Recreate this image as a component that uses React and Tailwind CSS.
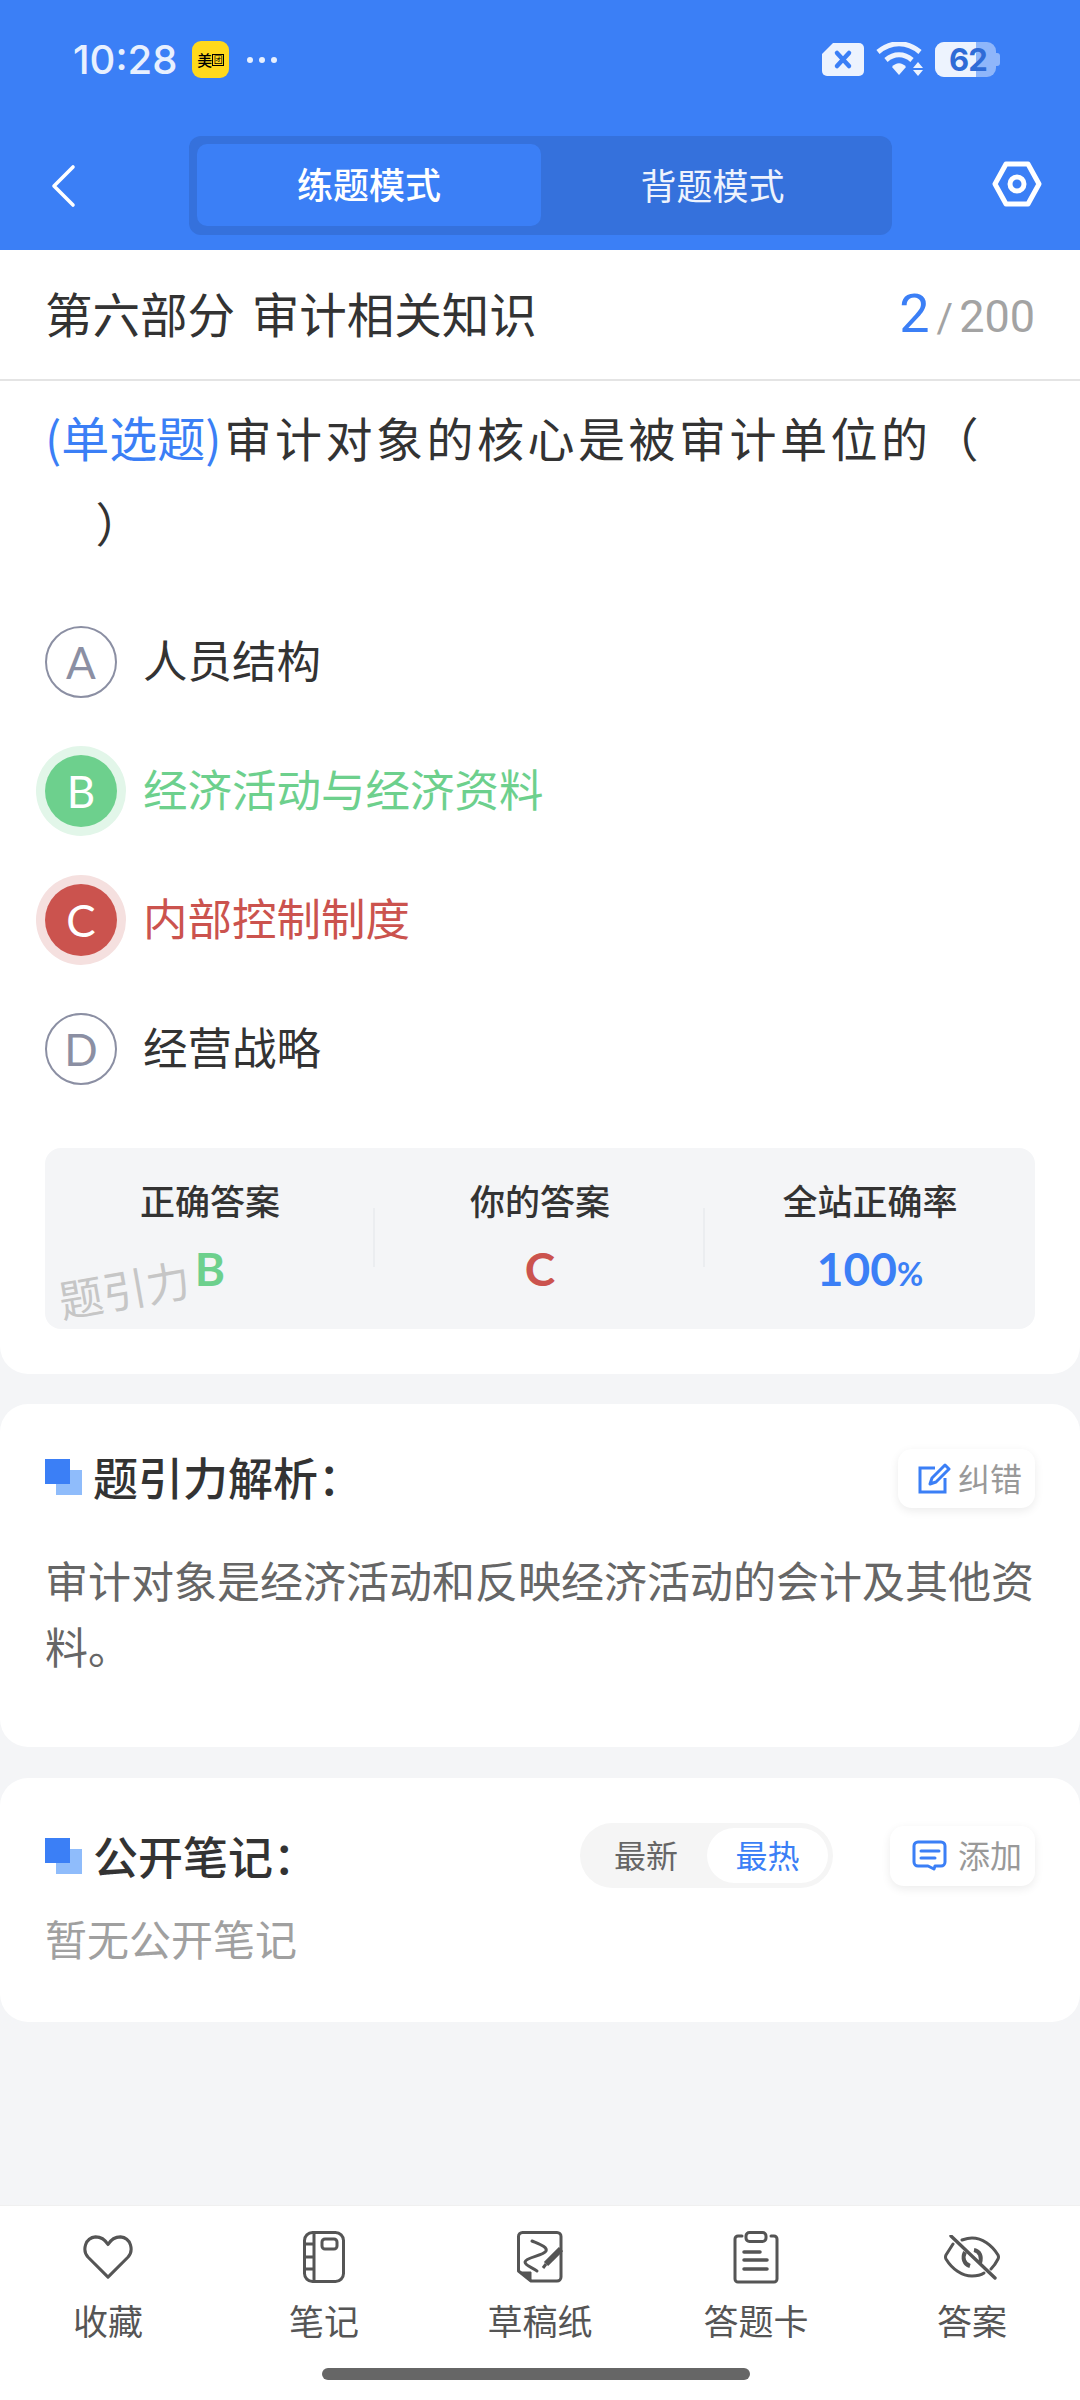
const cjk = { fontFamily: '"Noto Sans CJK SC", "Noto Sans", sans-serif' };

const StatusBar = () => (
  <div className="h-[120px] flex items-start justify-between pt-[41px] pl-[73px] pr-[80px]">
    <div className="flex items-center h-[37px]">
      <span className="text-[40px] leading-[37px] font-medium text-[#e8f0fe] font-['Inter']">10:28</span>
      <div className="ml-[15px] w-[37px] h-[37px] rounded-[9px] bg-[#ffd91c] flex items-center justify-center">
        <span className="text-[15px] leading-none font-medium text-black">美</span>
        <span className="w-[12px] h-[12px] border border-black text-[9px] leading-[10px] text-center text-black">团</span>
      </div>
      <div className="ml-[18px] flex gap-[6px]">
        <span className="w-[6px] h-[6px] rounded-full bg-[#e8f0fe]" />
        <span className="w-[6px] h-[6px] rounded-full bg-[#e8f0fe]" />
        <span className="w-[6px] h-[6px] rounded-full bg-[#e8f0fe]" />
      </div>
    </div>
    <div className="flex items-center h-[37px] gap-[11px]">
      <svg width="44" height="35" viewBox="0 0 44 35">
        <path d="M12 1H38a5 5 0 0 1 5 5V29a5 5 0 0 1-5 5H6a5 5 0 0 1-5-5V12z" fill="#edf3fe" />
        <path d="M16 11l12 13M28 11L16 24" stroke="#3b7ff6" strokeWidth="4.5" strokeLinecap="round" />
      </svg>
      <svg width="48" height="36" viewBox="0 0 48 36">
        <path d="M2 10C15 -1 31 -1 44 10" fill="none" stroke="#edf3fe" strokeWidth="5" />
        <path d="M10 18C18 11 28 11 36 18" fill="none" stroke="#edf3fe" strokeWidth="5" />
        <path d="M16 25C20 20 26 20 30 25L23 33z" fill="#edf3fe" />
        <path d="M42 20l5 6H37zM37 28h10l-5 6z" fill="#edf3fe" />
      </svg>
      <div className="relative w-[65px] h-[35px]">
        <div className="absolute left-0 top-0 w-[61px] h-[35px] rounded-[9px] bg-[#8fb6fa]" />
        <div className="absolute right-0 top-[11px] w-[5px] h-[13px] rounded-r-[3px] bg-[#8fb6fa]" />
        <div className="absolute left-0 top-0 w-[41px] h-[35px] rounded-l-[9px] bg-[#edf3fe]" />
        <span className="absolute left-[14px] top-0 text-[31px] leading-[35px] font-bold text-[#2f6bd6] font-['Inter'] tracking-[-1px]">62</span>
      </div>
    </div>
  </div>
);

const Header = () => (
  <div className="h-[130px] flex items-start pl-[50px] pt-[16px]">
    <svg width="26" height="44" viewBox="0 0 26 44" fill="none" stroke="white" strokeWidth="3.6" strokeLinecap="round" strokeLinejoin="round" className="mt-[28px]">
      <path d="M23 3L4 22L23 41" />
    </svg>
    <div className="ml-[113px] w-[703px] h-[99px] rounded-[12px] bg-[#3571dc] p-[8px] flex">
      <div className="w-[344px] h-[82px] rounded-[10px] bg-[#3b7ff6] flex items-center justify-center pb-[4px]">
        <span className="text-[36px] font-medium text-white">练题模式</span>
      </div>
      <div className="flex-1 flex items-center justify-center pb-[4px]">
        <span className="text-[36px] text-[#eef3fd]">背题模式</span>
      </div>
    </div>
    <svg width="50" height="46" viewBox="0 0 50 46" className="ml-[100px] mt-[25px]">
      <path d="M14 3H36L47 23L36 43H14L3 23z" fill="none" stroke="white" strokeWidth="5" strokeLinejoin="round" />
      <circle cx="25" cy="23" r="7" fill="none" stroke="white" strokeWidth="5" />
    </svg>
  </div>
);

const OptionRow = ({ letter, text, state }) => {
  const circle = {
    none: 'border-2 border-[#8b8fa3] text-[#8b8fa3]',
    right: 'bg-[#6dd08d] text-white ring-[9px] ring-[#e2f6e9]',
    wrong: 'bg-[#cb534e] text-white ring-[9px] ring-[#f5e0df]',
  }[state];
  const label = {
    none: 'text-[#333333]',
    right: 'text-[#6dd08d]',
    wrong: 'text-[#cb534e]',
  }[state];
  return (
    <div className="h-[129px] flex items-center">
      <div className={`w-[72px] h-[72px] rounded-full flex items-center justify-center text-[44px] font-['Lato'] ${circle}`}>
        {letter}
      </div>
      <span className={`ml-[26px] pb-[4px] text-[44.5px] ${label}`}>{text}</span>
    </div>
  );
};

const Stat = ({ label, children, divider }) => (
  <div className="relative flex-1 flex flex-col items-center pt-[29px]">
    {divider && <div className="absolute -left-[2px] top-[60px] h-[59px] w-[2px] bg-[#ebedf0]" />}
    <span className="text-[35px] leading-[46px] font-medium text-[#333333]">{label}</span>
    {children}
  </div>
);

const CardTitle = ({ children }) => (
  <div className="flex items-center">
    <div className="relative w-[37px] h-[36px]">
      <div className="absolute left-[11px] top-[11px] w-[26px] h-[25px] bg-[#8fbcfb]" />
      <div className="absolute left-0 top-0 w-[25px] h-[25px] bg-[#3b7ff6]" />
    </div>
    <span className="ml-[11px] text-[45px] leading-[60px] font-medium text-[#333333]">{children}</span>
  </div>
);

const NavItem = ({ label, children }) => (
  <div className="w-[216px] flex flex-col items-center">
    <div className="h-[60px] flex items-center justify-center">{children}</div>
    <span className="mt-[9px] text-[35px] leading-[48px] text-[#555555]">{label}</span>
  </div>
);

export default function App() {
  return (
    <div className="w-[1080px] h-[2400px] flex flex-col bg-[#f4f5f7]" style={cjk}>
      <div className="bg-[#3b7ff6]">
        <StatusBar />
        <Header />
      </div>

      <div className="bg-white rounded-b-[28px] h-[1124px]">
        <div className="h-[131px] border-b-2 border-[#e4e4e4] flex items-center justify-between px-[45px] pb-[3px]">
          <span className="text-[47.5px] text-[#333333] whitespace-pre [word-spacing:6px]">第六部分 审计相关知识</span>
          <div className="flex items-baseline font-['Roboto']">
            <span className="text-[54px] text-[#3b7ff6]">2</span>
            <span className="ml-[7px] text-[40px] text-[#a3a3a3]">/</span>
            <span className="ml-[6px] text-[45px] text-[#a3a3a3]">200</span>
          </div>
        </div>
        <div className="px-[45px]">
          <p className="pt-[13px] text-[47px] leading-[85px] text-[#333333] tracking-[3.5px]">
            <span className="text-[48px] text-[#3b7ff6] tracking-normal">(单选题)</span>
            <span className="ml-[3px]">审计对象的核心是被审计单位的（</span>
            <br />
            <span>　）</span>
          </p>
          <div className="mt-[33px]">
            <OptionRow letter="A" text="人员结构" state="none" />
            <OptionRow letter="B" text="经济活动与经济资料" state="right" />
            <OptionRow letter="C" text="内部控制制度" state="wrong" />
            <OptionRow letter="D" text="经营战略" state="none" />
          </div>
          <div className="relative mt-[35px] h-[181px] rounded-[16px] bg-[#f4f5f7] flex">
            <Stat label="正确答案">
              <span className="mt-[19px] text-[46px] leading-[54px] font-bold text-[#6dd08d] font-['Lato']">B</span>
            </Stat>
            <Stat label="你的答案" divider>
              <span className="mt-[19px] text-[46px] leading-[54px] font-bold text-[#cb534e] font-['Lato']">C</span>
            </Stat>
            <Stat label="全站正确率" divider>
              <span className="mt-[19px] text-[46px] leading-[54px] font-bold text-[#3b7ff6] font-['Lato']">
                100<span className="text-[32px]">%</span>
              </span>
            </Stat>
            <span className="absolute left-[13px] top-[112px] text-[44px] leading-[56px] text-[#c6c6c6] -rotate-[10deg]">题引力</span>
          </div>
        </div>
      </div>

      <div className="mt-[30px] h-[343px] bg-white rounded-[28px] px-[45px] pt-[32px]">
        <div className="flex items-start justify-between">
          <div className="pt-[11px]"><CardTitle>题引力解析：</CardTitle></div>
          <div className="mt-[13px] w-[137px] h-[59px] rounded-[14px] bg-white shadow-[0_3px_10px_rgba(0,0,0,0.08)] flex items-center pl-[20px]">
            <svg width="33" height="31" viewBox="0 0 33 31" fill="none" stroke="#3b7ff6" strokeWidth="3">
              <path d="M17 5H2v24h25V15" />
              <path d="M27 2l4 4-13 13-6 2 2-6z" strokeLinejoin="round" />
            </svg>
            <span className="ml-[7px] pb-[4px] text-[32px] text-[#999999]">纠错</span>
          </div>
        </div>
        <p className="mt-[38px] text-[43px] leading-[66px] text-[#666666]">
          审计对象是经济活动和反映经济活动的会计及其他资料。
        </p>
      </div>

      <div className="mt-[31px] h-[244px] bg-white rounded-[28px] px-[45px] pt-[45px]">
        <div className="flex items-center justify-between h-[65px]">
          <CardTitle>公开笔记：</CardTitle>
          <div className="flex items-center">
            <div className="w-[253px] h-[65px] rounded-full bg-[#f5f5f5] p-[5px] flex items-center">
              <span className="flex-1 text-center pb-[4px] text-[32px] text-[#666666]">最新</span>
              <div className="w-[121px] h-[55px] rounded-full bg-white flex items-center justify-center pb-[4px]">
                <span className="text-[32px] text-[#3b7ff6]">最热</span>
              </div>
            </div>
            <div className="ml-[57px] w-[145px] h-[60px] rounded-[14px] bg-white shadow-[0_3px_10px_rgba(0,0,0,0.08)] flex items-center pl-[22px]">
              <svg width="35" height="31" viewBox="0 0 35 31" fill="none" stroke="#3b7ff6" strokeWidth="3">
                <path d="M6 2h23a4 4 0 0 1 4 4v16a4 4 0 0 1-4 4h-6l-1 3-6-3H6a4 4 0 0 1-4-4V6a4 4 0 0 1 4-4z" strokeLinejoin="round" />
                <path d="M9 11h18M9 18h14" strokeLinecap="round" />
              </svg>
              <span className="ml-[11px] pb-[4px] text-[32px] text-[#999999]">添加</span>
            </div>
          </div>
        </div>
        <p className="mt-[20px] text-[42px] leading-[60px] text-[#a0a0a0]">暂无公开笔记</p>
      </div>

      <div className="flex-1" />

      <div className="h-[195px] bg-white border-t border-[#f0f0f0]">
        <div className="flex pt-[21px]">
          <NavItem label="收藏">
            <svg width="52" height="46" viewBox="0 0 52 48" fill="none" stroke="#555555" strokeWidth="3.2" strokeLinejoin="round">
              <path d="M26 45L5 24C-1 17 2 4 13 3c6 0 10 3 13 8 3-5 7-8 13-8 11 1 14 14 8 21z" />
            </svg>
          </NavItem>
          <NavItem label="笔记">
            <svg width="42" height="52" viewBox="0 0 42 52" fill="none" stroke="#555555" strokeWidth="3">
              <rect x="1.5" y="1.5" width="39" height="49" rx="8" />
              <path d="M11 2v48M2 13h9M2 26h9M2 38h9" />
              <rect x="19" y="8" width="15" height="10" rx="3" />
            </svg>
          </NavItem>
          <NavItem label="草稿纸">
            <svg width="46" height="52" viewBox="0 0 46 52" fill="none" stroke="#555555" strokeWidth="3">
              <path d="M5.5 1.5H40a4 4 0 0 1 4 4V46a4 4 0 0 1-4 4H14L1.5 40V5.5a4 4 0 0 1 4-4z" strokeLinejoin="round" />
              <path d="M3 41H14V50z" fill="#555555" strokeWidth="1" />
              <path d="M15 10C22 13 31 16 29 20C26 25 9 26 8 31C8 35 17 37 20 40" strokeLinecap="round" />
              <path d="M44 18L29 33" strokeWidth="6" />
              <path d="M29 33L26 37" strokeWidth="3" />
            </svg>
          </NavItem>
          <NavItem label="答题卡">
            <svg width="46" height="53" viewBox="0 0 46 53" fill="none" stroke="#555555" strokeWidth="3">
              <path d="M9 5H5a3 3 0 0 0-3 3v40a3 3 0 0 0 3 3h36a3 3 0 0 0 3-3V8a3 3 0 0 0-3-3h-3" strokeLinecap="round" />
              <rect x="13" y="1.5" width="20" height="9" rx="3.5" />
              <path d="M11 21h16M11 29h23M11 38h23" strokeWidth="3.5" strokeLinecap="round" />
            </svg>
          </NavItem>
          <NavItem label="答案">
            <svg width="56" height="45" viewBox="0 0 56 45" fill="none" stroke="#555555" strokeWidth="3">
              <path d="M9 9L2 20Q1 22 2 24C8 34 18 41 28 41C33 41 37 40 40 38" strokeLinecap="round" />
              <path d="M18 5C21 4 25 3 28 3C38 3 48 10 54 20Q55 22 54 24C52 28 50 31 47 34" strokeLinecap="round" />
              <path d="M21 17C18 23 20 29 26 31M36 28C38 22 36 16 30 15" strokeWidth="4" />
              <path d="M7 1L51 43" strokeWidth="3.4" strokeLinecap="round" />
            </svg>
          </NavItem>
        </div>
        <div className="mt-[24px] ml-[322px] w-[428px] h-[12px] rounded-full bg-[#666666]" />
      </div>
    </div>
  );
}
